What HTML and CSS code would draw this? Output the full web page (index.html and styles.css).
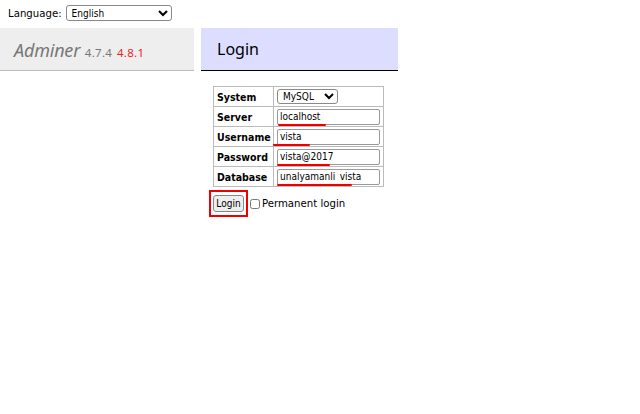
FILE: index.html
```html
<!DOCTYPE html>
<html lang="en">
<head>
<meta charset="utf-8">
<title>Login - Adminer</title>
<link rel="stylesheet" href="styles.css">
</head>
<body>
<form class="lang-bar">
  <label class="lang-label">Language:
    <select class="lang-select"><option>English</option></select>
  </label>
</form>
<div class="layout">
  <div class="menu">
    <h1 class="brand">
      <span class="brand-name">Adminer</span>
      <span class="version">4.7.4</span>
      <span class="new-version">4.8.1</span>
    </h1>
  </div>
  <div class="content">
    <h2 class="page-title">Login</h2>
    <form class="login-form">
      <table class="login-table">
        <tr><th>System</th><td><select class="driver"><option>MySQL</option></select></td></tr>
        <tr><th>Server</th><td><span class="field"><input class="text-input" value="localhost"><i class="mark" style="left:1px;width:48px"></i></span></td></tr>
        <tr><th>Username</th><td><span class="field"><input class="text-input" value="vista"><i class="mark" style="left:-4px;width:37px"></i></span></td></tr>
        <tr><th>Password</th><td><span class="field"><input class="text-input" value="vista@2017"><i class="mark" style="left:0;width:53px"></i></span></td></tr>
        <tr><th>Database</th><td><span class="field"><input class="text-input" value="unalyamanli_vista"><i class="mark" style="left:0;width:75px"></i></span></td></tr>
      </table>
      <div class="actions">
        <span class="login-wrap"><button type="button" class="login-btn">Login</button></span>
        <label class="permanent"><input type="checkbox" class="check"> Permanent login</label>
      </div>
    </form>
  </div>
</div>
</body>
</html>
```
FILE: styles.css
```css
html, body {
  margin: 0;
  padding: 0;
  background: #fff;
  color: #000;
  font-family: "DejaVu Sans Condensed", "DejaVu Sans", sans-serif;
  font-size: 12px;
}

.lang-bar {
  height: 28px;
  padding: 5px 0 0 8px;
  box-sizing: border-box;
}

.lang-label {
  font-size: 11.3px;
  display: flex;
  align-items: center;
  gap: 4px;
  height: 16px;
}

.lang-select {
  width: 106px;
  height: 16px;
  font: 10px "DejaVu Sans Condensed", "DejaVu Sans", sans-serif;
  border: 1px solid #888;
  border-radius: 3px;
  background: #fff;
  padding: 0 1px;
  margin: 0;
}

.layout {
  display: flex;
  gap: 7px;
  align-items: flex-start;
}

.menu {
  width: 194px;
}

.brand {
  margin: 0;
  height: 43px;
  box-sizing: border-box;
  background: #eee;
  border-bottom: 1px solid #bbb;
  padding: 12px 0 0 14px;
  font-weight: normal;
  font-size: 18px;
  line-height: 20px;
  color: #777;
  white-space: nowrap;
  font-family: "Noto Sans", sans-serif;
}

.brand-name {
  font-style: italic;
  font-size: 18px;
  letter-spacing: -0.2px;
  color: #777;
}

.version {
  font-size: 11.5px;
  color: #777;
  margin-left: 0;
  letter-spacing: 0.3px;
}

.new-version {
  font-size: 11.5px;
  color: #e22;
  margin-left: 0;
  letter-spacing: 0.3px;
}

.content {
  width: 197px;
}

.page-title {
  margin: 0;
  height: 43px;
  box-sizing: border-box;
  background: #ddf;
  border-bottom: 1px solid #000;
  padding: 11px 0 0 16px;
  font-weight: normal;
  font-size: 16px;
  line-height: 20px;
  font-family: "Noto Sans", sans-serif;
}

.login-form {
  padding: 15px 0 0 12px;
}

.login-table {
  border-collapse: collapse;
  border: 1px solid #bbb;
}

.login-table th,
.login-table td {
  border: 1px solid #bbb;
  padding: 1px 2px 1px 3px;
  height: 20px;
  box-sizing: border-box;
  vertical-align: middle;
}

.login-table th {
  text-align: left;
  font-size: 10.5px;
  font-weight: bold;
  width: 60px;
}

.login-table td {
  width: 110px;
}

.driver {
  width: 61px;
  height: 15px;
  font: 10px "DejaVu Sans Condensed", "DejaVu Sans", sans-serif;
  border: 1px solid #888;
  border-radius: 3px;
  background: #fff;
  margin: 0;
  padding: 0 1px;
}

.field {
  position: relative;
  display: block;
}

.text-input {
  display: block;
  width: 103px;
  height: 16px;
  box-sizing: border-box;
  border: 1px solid #999;
  border-radius: 2px;
  padding: 0 2px;
  font: 10px "DejaVu Sans Condensed", "DejaVu Sans", sans-serif;
  margin: 0;
}

.mark {
  position: absolute;
  bottom: -1px;
  height: 2px;
  background: #e00;
  border-radius: 1px;
}

.actions {
  display: flex;
  align-items: center;
  margin-top: 3px;
  margin-left: -4px;
  gap: 2px;
}

.login-wrap {
  display: inline-block;
  border: 2px solid #e00;
  padding: 3px 2px;
}

.login-btn {
  font: 10px "DejaVu Sans Condensed", "DejaVu Sans", sans-serif;
  height: 17px;
  width: 31px;
  padding: 0;
  border: 1px solid #888;
  border-radius: 3px;
  background: #eee;
  margin: 0;
}

.permanent {
  display: flex;
  align-items: center;
  font-size: 11.3px;
}

.check {
  width: 10px;
  height: 10px;
  margin: 0 2px 0 0;
}
```
